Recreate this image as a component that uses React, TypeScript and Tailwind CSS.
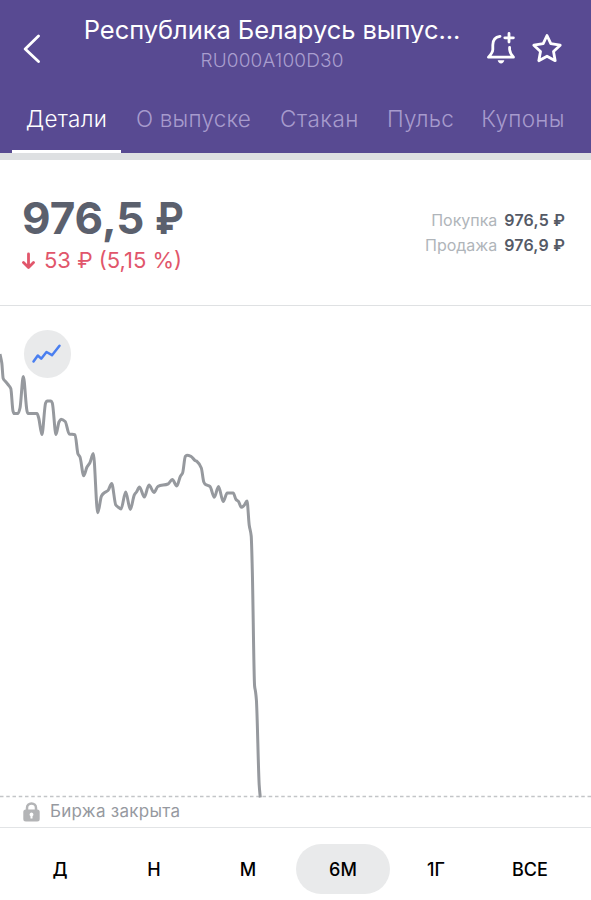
import React from 'react';

type Point = [number, number];

const prices: Point[] = [
  [0, 354], [1.8, 363], [3.2, 378.5], [5.5, 381.5], [8, 384.5], [10.8, 388.5], [13, 411], [14.2, 413.6], [18, 413.6], [20, 408],
  [23.3, 376.5], [27, 411], [28, 413.6], [37, 413.6], [38.7, 418], [41.9, 434.5], [45.6, 403], [47, 401], [51, 401], [52.3, 403],
  [56, 434.5], [59, 422], [61, 419.3], [65.2, 421.5], [69.2, 434], [75, 434.7], [78, 454], [80, 457], [83.7, 475.8], [87, 467],
  [89.8, 463], [93.3, 453.5], [97.7, 512.7], [101.5, 496], [104, 493], [108, 490.5], [111.7, 483.5], [115.8, 505], [118, 507], [121, 509],
  [125.7, 492], [130.3, 509.5], [134.3, 495], [136.5, 492], [139.5, 487], [144.3, 497], [149, 485], [154, 492.5], [158, 486.3], [168, 484],
  [172.3, 479.5], [176.8, 486], [180.3, 476.5], [182.6, 473], [185.3, 456.5], [187, 455.3], [191, 456.3], [195, 460.5], [197, 461.5], [201.3, 468],
  [203.8, 482], [205.5, 484.5], [210, 486.5], [214.3, 497.3], [218.5, 486.5], [223.2, 501.5], [227.2, 493], [233.2, 493], [236, 499.5], [238.5, 501.5],
  [241.3, 507.3], [244, 505.5], [247, 501], [249.2, 525], [251.2, 536], [252.3, 570], [254.6, 686], [255.5, 691.5], [256.4, 700], [259.2, 785], [260.3, 797.5],
];

// Monotone cubic interpolation keeps the peaks rounded without overshooting.
function monotonePath(points: Point[]): string {
  const slopes = points.slice(1).map((p, i) => (p[1] - points[i][1]) / (p[0] - points[i][0]));
  const tangents = points.map((_, i) => {
    if (i === 0) return slopes[0];
    if (i === points.length - 1) return slopes[i - 1];
    const a = slopes[i - 1];
    const b = slopes[i];
    return a * b <= 0 ? 0 : (2 * a * b) / (a + b);
  });
  let d = `M${points[0][0]},${points[0][1]}`;
  for (let i = 1; i < points.length; i++) {
    const [x0, y0] = points[i - 1];
    const [x1, y1] = points[i];
    const h = (x1 - x0) / 3;
    d += `C${x0 + h},${y0 + h * tangents[i - 1]} ${x1 - h},${y1 - h * tangents[i]} ${x1},${y1}`;
  }
  return d;
}

const tabs = [
  { label: 'Детали', style: 'w-[109px] text-white border-white tracking-[0.3px]' },
  { label: 'О выпуске', style: 'w-[145px] text-[#a79bcd] border-transparent tracking-[0.2px]' },
  { label: 'Стакан', style: 'w-[107px] text-[#a79bcd] border-transparent tracking-[0.5px]' },
  { label: 'Пульс', style: 'w-[95px] text-[#a79bcd] border-transparent tracking-[0.2px]' },
  { label: 'Купоны', style: 'w-[110px] text-[#a79bcd] border-transparent tracking-[0.3px]' },
];

const ranges = ['Д', 'Н', 'М', '6М', '1Г', 'ВСЕ'];

function Header() {
  return (
    <header className="h-[153px] bg-[#584a92] flex flex-col">
      <div className="h-[97px] flex">
        <button className="w-[84px] pl-[22px] pt-[34px] flex items-start" aria-label="Назад">
          <svg width="18" height="30" viewBox="0 0 18 30" fill="none" stroke="white" strokeWidth="2.8" strokeLinecap="round" strokeLinejoin="round">
            <path d="M16.500 2 3.200 15l13.300 12.500" />
          </svg>
        </button>
        <div className="w-[376px] flex flex-col items-center pt-[17px] whitespace-nowrap">
          <h1 className="h-[26px] leading-[26px] overflow-hidden text-[25.500px] tracking-[-0.06px] text-white">Республика Беларусь выпус...</h1>
          <p className="mt-[6px] h-6 leading-6 text-[19px] font-light tracking-[0.15px] text-[#a99ecf]">RU000A100D30</p>
        </div>
        <div className="flex pl-[25px] pt-[31px] gap-[15px] items-start">
          <svg width="31" height="34" viewBox="0 0 31 34" fill="none" stroke="white" strokeWidth="2.8" strokeLinecap="round" strokeLinejoin="round">
            <path d="M15 5.300C9.700 6 7.800 10 7.800 14v4.500c0 3-1.800 5-4.300 7.700h25c-2.400-2.700-3.700-4.700-3.900-7.700v-2" />
            <path d="M24 2.500v8.500M19.800 6.800h8.600" />
            <path d="M12.700 29.300h6.600c-.3 2-1.700 3.200-3.300 3.200s-3-1.200-3.300-3.200Z" fill="white" stroke="none" />
          </svg>
          <svg width="32" height="34" viewBox="0 0 32 34" fill="none" stroke="white" strokeWidth="2.800" strokeLinejoin="round">
            <path d="M16 4.500 19.800 12.700 29.200 14.200l-6.700 6.300 1.700 9.200-8.200-4.500-8.200 4.500 1.700-9.200L2.800 14.200 12.200 12.700Z" />
          </svg>
        </div>
      </div>
      <nav className="h-14 pl-[12px] flex">
        {tabs.map((t) => (
          <button key={t.label} className={`${t.style} h-14 border-b-[3px] pb-[9px] flex items-center justify-center text-[22.500px] font-light whitespace-nowrap`}>
            {t.label}
          </button>
        ))}
      </nav>
    </header>
  );
}

function Summary() {
  return (
    <section className="h-[146px] border-b border-[#dfe1e3] flex justify-between pl-[22px] pr-[26px] whitespace-nowrap">
      <div className="pt-[33px]">
        <div className="h-[50px] leading-[50px] text-[44px] font-bold text-[#5b606d]">
          976,5 <span className="inline-block origin-left scale-x-[0.88]">₽</span>
        </div>
        <div className="h-[34px] pt-px flex items-center text-[22px] text-[#e1566b]">
          <svg className="mr-[9px]" width="13" height="18" viewBox="0 0 13 18" fill="none" stroke="currentColor" strokeWidth="2.800" strokeLinecap="round" strokeLinejoin="round">
            <path d="M6.500 2v13M1.500 10.500l5 5 5-5" />
          </svg>
          53 ₽ (5,15 %)
        </div>
      </div>
      <div className="pt-[48px] text-[16px] leading-[25px] text-right">
        <div><span className="text-[#b0b5ba] mr-[7px] tracking-[-0.03px]">Покупка</span><span className="font-semibold tracking-[0.2px] text-[#555a66]">976,5 ₽</span></div>
        <div><span className="text-[#b0b5ba] mr-[7px] tracking-[-0.03px]">Продажа</span><span className="font-semibold tracking-[0.2px] text-[#555a66]">976,9 ₽</span></div>
      </div>
    </section>
  );
}

function Chart() {
  return (
    <section className="relative h-[491px]">
      <svg className="block" width="591" height="492" viewBox="0 306 591 492" fill="none">
        <path d="M0 796.500H591" stroke="#c3c5c8" strokeWidth="1.500" strokeDasharray="3.500 2.750" />
        <path d={monotonePath(prices)} stroke="#96999e" strokeWidth="3" strokeLinejoin="round" />
      </svg>
      <button className="absolute left-[23.500px] top-[24px] size-[47.500px] rounded-full bg-[#e9eaeb] flex items-center justify-center" aria-label="Тип графика">
        <svg width="32" height="24" viewBox="0 0 32 24" fill="none" stroke="#4a7ff0" strokeWidth="2.500" strokeLinecap="round" strokeLinejoin="round">
          <path d="m2.500 19.500 4.300-6 3.400 3.200 5.300-6.700 5.500 3.200 7.500-9.500" />
        </svg>
      </button>
    </section>
  );
}

export default function App() {
  return (
    <main className="w-[591px] h-[900px] bg-white overflow-hidden font-['Inter','Liberation_Sans',sans-serif]">
      <Header />
      <div className="h-[7px] bg-[#dee0e2]" />
      <Summary />
      <Chart />
      <div className="h-[31px] border-b border-[#e2e4e6] pl-[23px] flex items-center text-[17px] tracking-[0.27px] text-[#9699a0]">
        <svg className="mr-[10px]" width="17" height="20" viewBox="0 0 17 20">
          <path d="M4 9V6C4 3.200 6 1.500 8.500 1.500S13 3.200 13 6V9" fill="none" stroke="#b3b4b6" strokeWidth="2.500" />
          <rect x=".3" y="7.500" width="16.400" height="12" rx="2.500" fill="#b3b4b6" />
          <path d="M8.500 10.500a2 2 0 0 1 1 3.700V16.500h-2v-2.300a2 2 0 0 1 1-3.700Z" fill="white" />
        </svg>
        <span>Биржа закрыта</span>
      </div>
      <nav className="h-[72px] pt-4 pl-[13px] flex text-[18px] font-medium text-black">
        {ranges.map((r) => (
          <button key={r} className={`w-[94px] h-[50px] rounded-full shrink-0 ${r === '6М' ? 'bg-[#e9eaeb] translate-x-px' : ''}`}>
            {r}
          </button>
        ))}
      </nav>
    </main>
  );
}
